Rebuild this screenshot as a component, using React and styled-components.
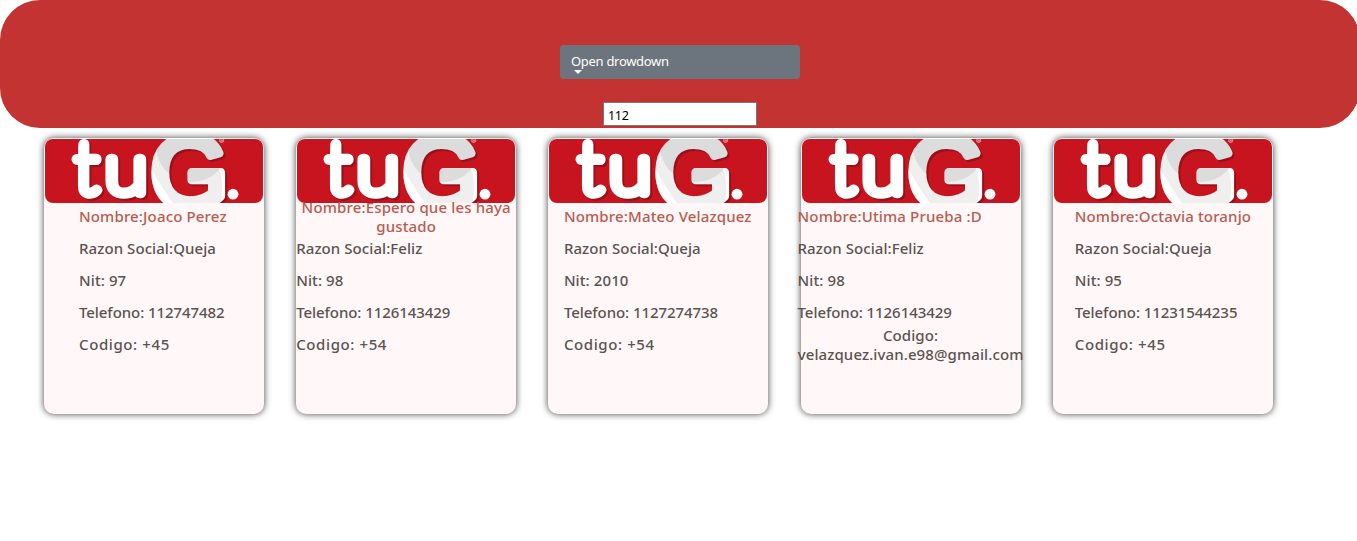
import React, { useId } from "react";
import styled, { createGlobalStyle } from "styled-components";

const GlobalStyle = createGlobalStyle`
  * { box-sizing: border-box; }
  body {
    margin: 0;
    background: #fff;
    font-family: "Noto Sans", "Open Sans", sans-serif;
  }
`;

const Page = styled.div`
  min-height: 100vh;
  overflow: hidden;
`;

const Header = styled.header`
  width: 1360px;
  height: 128px;
  padding-top: 45px;
  display: flex;
  flex-direction: column;
  align-items: center;
  gap: 23px;
  background: #c33332;
  border-radius: 40px;
`;

const DropdownButton = styled.button`
  flex: none;
  width: 240px;
  height: 34px;
  padding: 8px 11px 0;
  display: flex;
  flex-direction: column;
  align-items: flex-start;
  border: 0;
  border-radius: 4px;
  background: #6c757d;
  color: #fff;
  font: 400 13px/17px "Noto Sans", sans-serif;
  letter-spacing: -0.3px;
`;

const Caret = styled.span`
  margin-left: 3px;
  border: 4px solid transparent;
  border-top-color: #fff;
  border-bottom: 0;
`;

const SearchInput = styled.input`
  width: 154px;
  height: 24px;
  padding: 3px 4px 0;
  border: 1px solid #767676;
  border-radius: 0;
  background: #fff;
  color: #000;
  font: 400 12.5px "Noto Sans", sans-serif;
  letter-spacing: -0.3px;
`;

const CardList = styled.main`
  display: flex;
  gap: 32.2px;
  padding: 10px 0 0 44px;
`;

const Card = styled.article`
  flex: none;
  width: 220px;
  height: 276px;
  padding-top: 1px;
  display: flex;
  flex-direction: column;
  align-items: center;
  border-radius: 10px;
  background: #fff7f8;
  box-shadow: 0 0 7px rgba(0, 0, 0, 0.75);
`;

const Banner = styled.svg`
  flex: none;
  display: block;
  width: 218px;
  height: 64px;
  border-radius: 8px;
`;

const Mark = styled.g`
  filter: drop-shadow(2px 2px 0.5px #99101a);
`;

const Details = styled.div`
  flex: none;
  width: ${(p) => p.$width}px;
  margin-top: -2px;
  display: grid;
  grid-auto-rows: 32px;
  align-items: center;
  justify-items: start;
`;

const Line = styled.p`
  margin: 0;
  padding-bottom: ${(p) => (p.$wrap ? 0 : 2)}px;
  justify-self: ${(p) => (p.$wrap ? "center" : "start")};
  text-align: center;
  white-space: ${(p) => (p.$wrap ? "pre-line" : "nowrap")};
  color: ${(p) => (p.$name ? "#b95c50" : "#5b5351")};
  font-size: 15px;
  font-weight: 500;
  line-height: 19px;
  letter-spacing: ${(p) => p.$track || 0}px;
`;

function Logo() {
  const id = useId();
  return (
    <Banner viewBox="0 0 218 64" role="img" aria-label="tuG.">
      <defs>
        <mask id={id} maskUnits="userSpaceOnUse" x="95" y="-15" width="100" height="95">
          <text x="105.5" y="67.5" fontFamily="Liberation Sans" fontSize="100" fill="#fff" stroke="#fff" strokeWidth="8.5" strokeLinejoin="round">G</text>
        </mask>
      </defs>
      <rect width="218" height="64" fill="#c8141e" />
      <Mark fill="#fff" stroke="#fff" strokeLinejoin="round" fontFamily="Lato" fontWeight="100">
        <text x="29.5" y="54" fontSize="73" strokeWidth="10.5">t</text>
        <text x="59.5" y="54" fontSize="71" strokeWidth="10.5" textLength="43" lengthAdjust="spacingAndGlyphs">u</text>
      </Mark>
      <Mark>
        <g mask={`url(#${id})`}>
          <rect x="95" y="-15" width="100" height="95" fill="#efefef" />
          <circle cx="147" cy="7" r="36" fill="#dcdcdc" />
          <path d="M95 5 Q107 35 128 64 H95Z M173 26 Q180 27 184 40 V68 H174 Q181 48 173 26Z" fill="#fff" />
        </g>
      </Mark>
      <circle cx="188" cy="55.2" r="5.4" fill="#fff" />
      <text x="174" y="4.5" fontFamily="Inter" fontSize="8" fill="#f4d5d7">®</text>
    </Banner>
  );
}

const people = [
  { name: "Joaco Perez", reason: "Queja", nit: "97", phone: "112747482", code: "+45", width: 150 },
  { name: "Espero que les haya\ngustado", reason: "Feliz", nit: "98", phone: "1126143429", code: "+54", width: 220, wrapName: true },
  { name: "Mateo Velazquez", reason: "Queja", nit: "2010", phone: "1127274738", code: "+54", width: 189 },
  { name: "Utima Prueba :D", reason: "Feliz", nit: "98", phone: "1126143429", code: "\nvelazquez.ivan.e98@gmail.com", width: 226, wrapCode: true },
  { name: "Octavia toranjo", reason: "Queja", nit: "95", phone: "11231544235", code: "+45", width: 176 },
];

export default function App() {
  return (
    <Page>
      <GlobalStyle />
      <Header>
        <DropdownButton>
          Open drowdown
          <Caret />
        </DropdownButton>
        <SearchInput defaultValue="112" />
      </Header>
      <CardList>
        {people.map((p) => (
          <Card key={p.name}>
            <Logo />
            <Details $width={p.width}>
              <Line $name $wrap={p.wrapName} $track={0.15}>Nombre:{p.name}</Line>
              <Line $track={0.07}>Razon Social:{p.reason}</Line>
              <Line $track={0.1}>Nit: {p.nit}</Line>
              <Line $track={-0.07}>Telefono: {p.phone}</Line>
              <Line $wrap={p.wrapCode} $track={p.wrapCode ? 0.1 : 0.6}>Codigo: {p.code}</Line>
            </Details>
          </Card>
        ))}
      </CardList>
    </Page>
  );
}
